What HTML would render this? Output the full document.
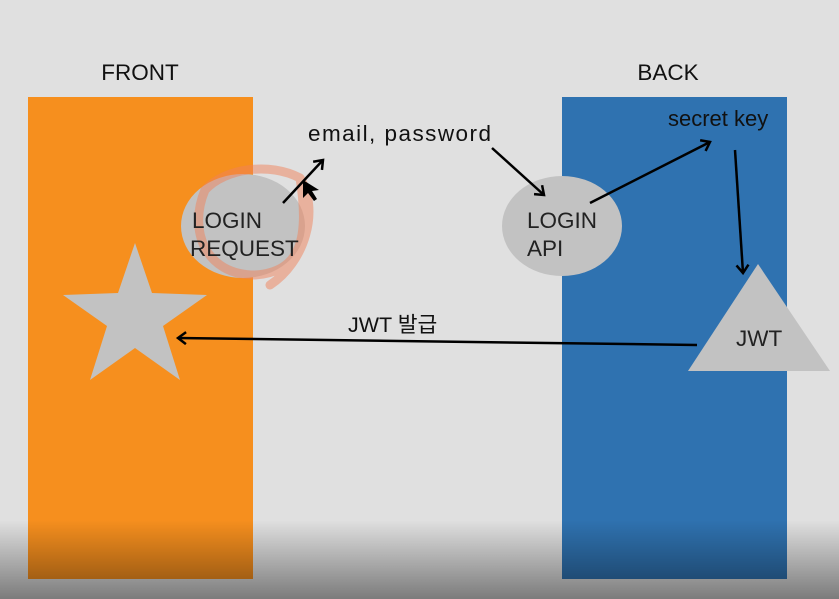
<!DOCTYPE html>
<html><head><style>
html,body{margin:0;padding:0;width:839px;height:599px;overflow:hidden;background:#e0e0e0;}
svg{display:block}
text{font-family:"Liberation Sans","Noto Sans CJK KR",sans-serif;}
</style></head><body>
<svg width="839" height="599" viewBox="0 0 839 599">
<defs>
<linearGradient id="sh" x1="0" y1="0" x2="0" y2="1">
<stop offset="0" stop-color="#000" stop-opacity="0"/>
<stop offset="1" stop-color="#000" stop-opacity="0.45"/>
</linearGradient>
<marker id="ah" markerWidth="14" markerHeight="14" refX="10" refY="7" orient="auto" markerUnits="userSpaceOnUse">
<path d="M2,1 L10,7 L2,13" fill="none" stroke="#000" stroke-width="2.5"/>
</marker>
</defs>
<rect width="839" height="599" fill="#e0e0e0"/>
<rect x="28" y="97" width="225" height="482" fill="#f68f1e"/>
<rect x="562" y="97" width="225" height="482" fill="#2f72b0"/>
<text x="140" y="80" font-size="22.5" text-anchor="middle" fill="#111">FRONT</text>
<text x="668" y="80" font-size="22.5" text-anchor="middle" fill="#111">BACK</text>
<polygon points="135,243 152,293 207,295 163,326 180,380 135,348 90,380 107,326 63,295 118,293" fill="#c2c2c2"/>
<ellipse cx="243" cy="226" rx="62" ry="52" fill="#c2c2c2"/>
<path d="M205,190 C188,230 205,275 255,275 C300,272 310,240 300,178 M300,178 C320,210 305,262 270,285 M205,190 C225,168 270,162 300,178" fill="none" stroke="#f0825a" stroke-width="9" stroke-opacity="0.5" stroke-linecap="round"/>
<text x="192" y="228" font-size="22.5" fill="#222">LOGIN</text>
<text x="190" y="256" font-size="22.5" fill="#222">REQUEST</text>
<line x1="283" y1="203" x2="323" y2="160" stroke="#000" stroke-width="2.5" marker-end="url(#ah)"/>
<path d="M303,180 l0,18 l5,-5 l6,8 l3,-2 l-5,-8 l7,-1 z" fill="#000"/>
<text x="308" y="141" font-size="22.5" fill="#111" textLength="183" lengthAdjust="spacing">email, password</text>
<ellipse cx="562" cy="226" rx="60" ry="50" fill="#c2c2c2"/>
<line x1="492" y1="148" x2="544" y2="195" stroke="#000" stroke-width="2.5" marker-end="url(#ah)"/>
<text x="527" y="228" font-size="22.5" fill="#222">LOGIN</text>
<text x="527" y="256" font-size="22.5" fill="#222">API</text>
<line x1="590" y1="203" x2="710" y2="142" stroke="#000" stroke-width="2.5" marker-end="url(#ah)"/>
<text x="668" y="126" font-size="22" fill="#111">secret key</text>
<line x1="735" y1="150" x2="743" y2="273" stroke="#000" stroke-width="2.5" marker-end="url(#ah)"/>
<polygon points="758,264 830,371 688,371" fill="#c2c2c2"/>
<text x="736" y="346" font-size="22.5" fill="#222">JWT</text>
<line x1="697" y1="345" x2="178" y2="338" stroke="#000" stroke-width="2.5" marker-end="url(#ah)"/>
<text x="348" y="332" font-size="21.5" fill="#111">JWT 발급</text>
<rect x="0" y="520" width="839" height="79" fill="url(#sh)"/>
</svg>
</body></html>
